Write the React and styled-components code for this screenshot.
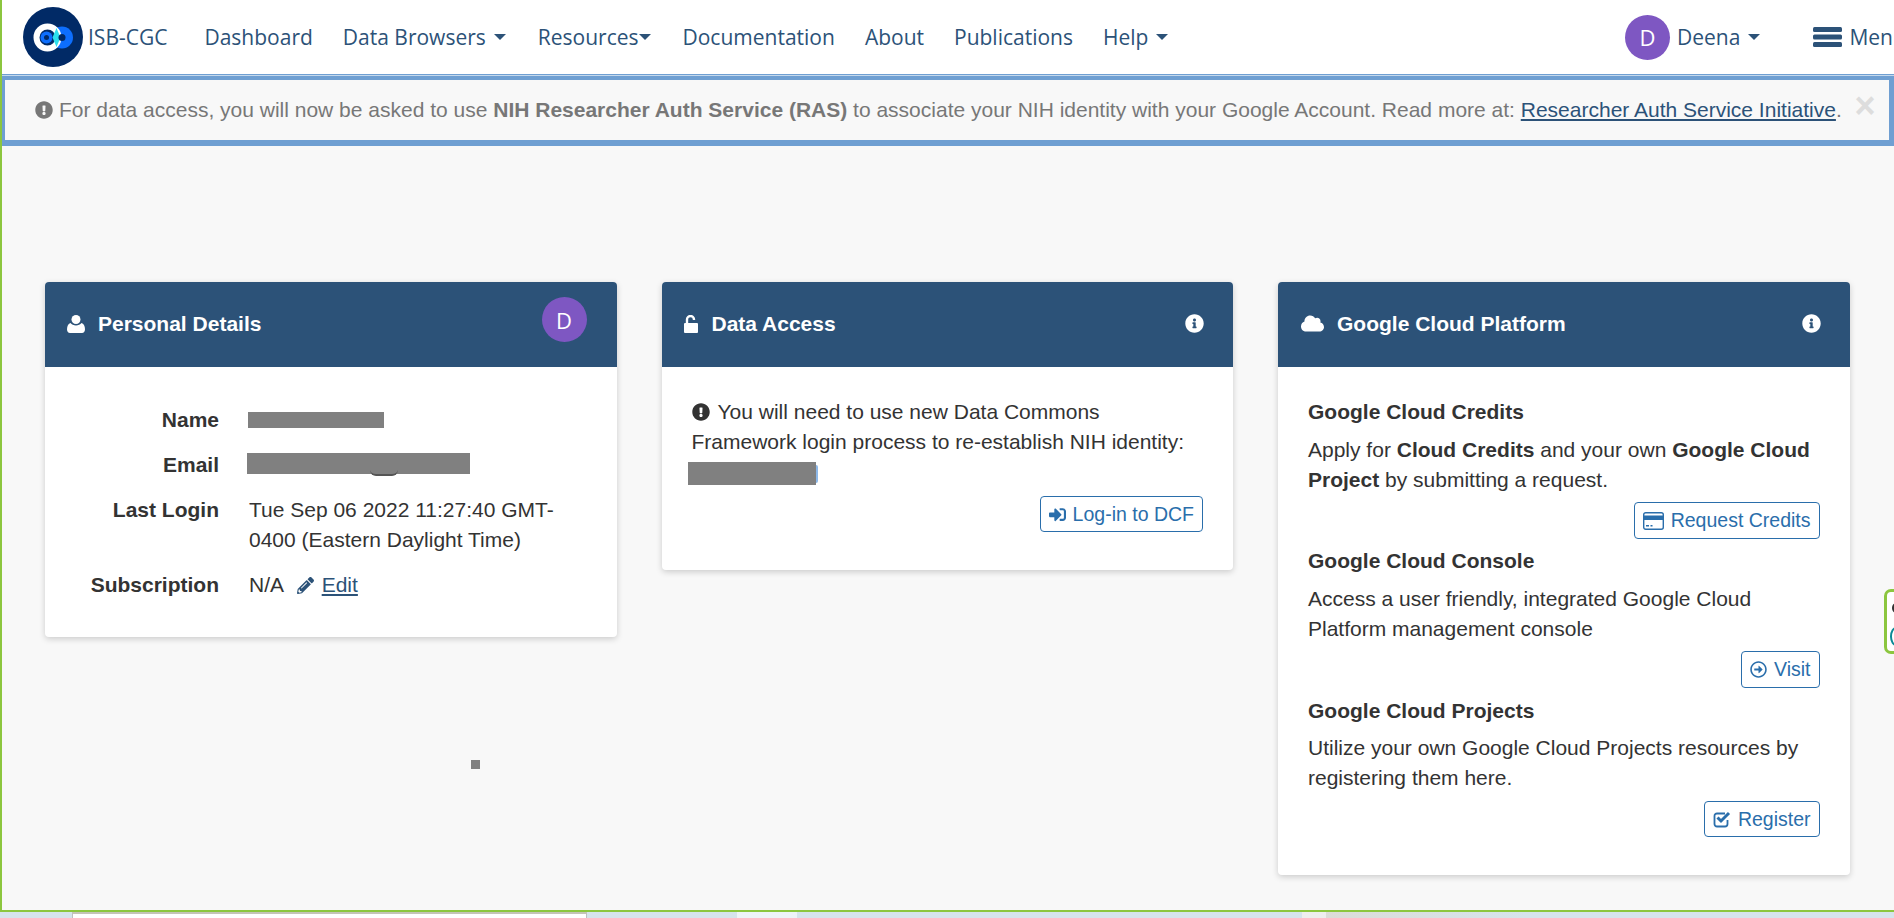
import React from 'react';
import styled, { createGlobalStyle } from 'styled-components';
import { FaInfoCircle, FaExclamationCircle, FaPencilAlt, FaSignInAlt, FaRegArrowAltCircleRight, FaCloud } from 'react-icons/fa';

const GlobalStyle = createGlobalStyle`
  html, body {
    margin: 0;
    padding: 0;
    background: #d6e4ec;
    overflow: hidden;
  }
  * {
    box-sizing: border-box;
  }
`;

const navy = '#2c5278';
const linkBlue = '#2a6eab';
const textDark = '#333333';
const green = '#8cc63f';

const Screen = styled.div`
  position: relative;
  width: 1894px;
  height: 918px;
  overflow: hidden;
  background: #d6e4ec;
  font-family: "Liberation Sans", Arial, sans-serif;
  color: ${textDark};
`;

const Window = styled.div`
  height: 912px;
  border-left: 2px solid ${green};
  border-bottom: 2px solid ${green};
  background: #f8f8f8;
  display: flex;
  flex-direction: column;
`;

const DesktopStrip = styled.div`
  height: 6px;
  display: flex;
`;

const DesktopTile = styled.div`
  flex: none;
  margin-left: ${p => p.$left}px;
  width: ${p => p.$width}px;
  background: ${p => p.$bg};
`;

const WhiteTile = styled(DesktopTile)`
  border-top: 2px solid #c4c4b8;
  border-left: 1px solid #c0c0c0;
  border-right: 1px solid #c0c0c0;
`;

const NavBar = styled.nav`
  height: 74px;
  flex: none;
  background: #fff;
  display: flex;
  align-items: center;
  padding-left: 21px;
  font-family: "Open Sans", sans-serif;
  font-size: 21px;
  color: ${navy};
  white-space: nowrap;
`;

const Logo = styled.svg`
  width: 60px;
  height: 60px;
  flex: none;
`;

const Brand = styled.span`
  margin-left: 5px;
  margin-right: 37px;
`;

const NavItem = styled.a`
  display: flex;
  align-items: center;
  margin-right: ${p => p.$gap ?? 30}px;
  color: ${navy};
`;

const Caret = styled.span`
  display: inline-block;
  flex: none;
  margin-left: ${p => p.$left ?? 8}px;
  border-top: 6px solid ${navy};
  border-left: 6px solid transparent;
  border-right: 6px solid transparent;
`;

const NavRight = styled.div`
  margin-left: auto;
  display: flex;
  align-items: center;
  width: 269px;
  flex: none;
  overflow: hidden;
`;

const Avatar = styled.span`
  width: 45px;
  height: 45px;
  flex: none;
  border-radius: 50%;
  background: #7e57c2;
  color: #fff;
  font-family: "Open Sans", sans-serif;
  font-size: 22px;
  font-weight: normal;
  display: flex;
  align-items: center;
  justify-content: center;
`;

const HeaderAvatar = styled(Avatar)`
  margin-top: -8px;
`;

const UserName = styled.span`
  margin-left: 7px;
`;

const MenuBars = styled.svg`
  width: 29px;
  height: 20px;
  margin-left: 53px;
  margin-right: 7px;
  flex: none;
`;

const Alert = styled.div`
  height: 72px;
  flex: none;
  border-style: solid;
  border-color: #6f9fd2;
  border-width: 6px 5px 6px 3px;
  background: #f8f8f8;
  color: #777;
  font-size: 21px;
  display: flex;
  align-items: center;
  padding-left: 30px;
  position: relative;
  white-space: nowrap;

  &::before {
    content: "";
    position: absolute;
    left: -3px;
    right: -5px;
    top: -5px;
    height: 1px;
    background: #c4d8ec;
  }
`;

const AlertIcon = styled(FaExclamationCircle)`
  width: 18px;
  height: 18px;
  margin-right: 6px;
  flex: none;
`;

const AlertLink = styled.a`
  color: ${navy};
  text-decoration: underline;
`;

const CloseMark = styled.span`
  position: absolute;
  right: 16px;
  top: 18px;
  width: 16px;
  height: 16px;
  font-size: 36px;
  font-weight: bold;
  line-height: 16px;
  color: #dddddd;
  display: flex;
  align-items: center;
  justify-content: center;
`;

const Cards = styled.main`
  display: flex;
  align-items: flex-start;
  gap: 45px;
  padding: 136px 0 0 43px;
`;

const Card = styled.section`
  width: 571.500px;
  flex: none;
  height: ${p => p.$height}px;
  background: #fff;
  border-radius: 4px;
  box-shadow: 0 2px 6px rgba(0, 0, 0, 0.18);
  overflow: hidden;
`;

const CardHeader = styled.header`
  height: 85px;
  background: ${navy};
  color: #fff;
  display: flex;
  align-items: center;
  padding: 0 ${p => p.$right ?? 30}px 2px ${p => p.$left ?? 22}px;
`;

const HeaderIcon = styled.span`
  display: flex;
  width: ${p => p.$width}px;
  flex: none;
`;

const HeaderTitle = styled.h2`
  margin: 0;
  font-size: 21px;
  font-weight: bold;
  flex: 1;
`;

const CardBody = styled.div`
  padding: ${p => p.$padding};
  font-size: 21px;
  line-height: 30px;
`;

const DetailRow = styled.div`
  display: grid;
  grid-template-columns: 174px 1fr;
  column-gap: 30px;
  margin-bottom: 15px;
`;

const DetailLabel = styled.div`
  font-weight: bold;
  text-align: right;
`;

const Redacted = styled.span`
  display: block;
  position: relative;
  background: #808080;
  width: ${p => p.$width}px;
  height: ${p => p.$height}px;
  margin: ${p => p.$margin};
`;

const AtFragment = styled.span`
  position: absolute;
  left: 123px;
  top: calc(100% - 4px);
  width: 28px;
  height: 6px;
  border-bottom: 2px solid #555;
  border-radius: 0 0 14px 14px;
`;

const LinkSliver = styled.span`
  position: absolute;
  left: 100%;
  top: 3px;
  bottom: 2px;
  width: 2px;
  background: #8db8e8;
  border-radius: 0 2px 2px 0;
`;

const EditIcon = styled(FaPencilAlt)`
  width: 17px;
  height: 17px;
  margin: 0 8px 0 8px;
  color: ${navy};
  vertical-align: -2px;
`;

const EditLink = styled.a`
  color: ${navy};
  text-decoration: underline;
`;

const InlineIcon = styled(FaExclamationCircle)`
  width: 18px;
  height: 18px;
  margin-right: 8px;
  vertical-align: -2px;
`;

const ActionRow = styled.div`
  display: flex;
  justify-content: flex-end;
`;

const ActionButton = styled.button`
  height: ${p => p.$height ?? 37}px;
  padding: 0 8px;
  background: #fff;
  border: 1px solid ${linkBlue};
  border-radius: 4px;
  color: ${linkBlue};
  font-family: "Liberation Sans", Arial, sans-serif;
  font-size: 19.500px;
  display: flex;
  align-items: center;
  gap: 7px;
`;

const SectionTitle = styled.h3`
  margin: 0;
  font-size: 21px;
  line-height: 30px;
  padding-bottom: ${p => p.$below ?? 8}px;
`;

const SectionText = styled.p`
  margin: 0 0 ${p => p.$below ?? 7}px;
`;

const Section = styled.div`
  margin-bottom: ${p => p.$below ?? 7}px;
`;

const StrayMark = styled.span`
  position: absolute;
  left: 471px;
  top: 760px;
  width: 9px;
  height: 9px;
  background: #808080;
`;

const EdgeWidget = styled.div`
  position: absolute;
  left: 1884px;
  top: 589px;
  width: 30px;
  height: 65px;
  border: 3px solid ${green};
  border-radius: 7px;
  background: #fff;
`;

const EdgeDot = styled.span`
  position: absolute;
  left: 5px;
  top: 11px;
  width: 8px;
  height: 10px;
  border-radius: 50%;
  background: #333;
`;

const EdgeArc = styled.span`
  position: absolute;
  left: 3px;
  top: 35px;
  width: 12px;
  height: 19px;
  border: 2px solid #0a8a96;
  border-radius: 50%;
`;

const UserIcon = () => (
  <svg width="18" height="18" viewBox="0 0 18 18" fill="#fff">
    <ellipse cx="9" cy="4.500" rx="4.500" ry="4.500" />
    <path d="M3.500 8c1.200 1.600 3.200 2.400 5.500 2.400s4.300-.8 5.500-2.400c2 .4 3.500 3 3.500 6.200 0 2.400-1.200 3.800-3 3.800H3c-1.800 0-3-1.400-3-3.800C0 11 1.500 8.400 3.500 8z" />
  </svg>
);

const UnlockIcon = () => (
  <svg width="14" height="18" viewBox="0 0 14 18" fill="#fff">
    <rect x="0" y="8" width="14" height="10" rx="1" />
    <path d="M3 8V4.500a3.500 3.500 0 0 1 7 0V5" fill="none" stroke="#fff" strokeWidth="2.400" />
  </svg>
);

const CardIcon = () => (
  <svg width="21" height="18" viewBox="0 0 21 18">
    <rect x="0.700" y="0.700" width="19.600" height="16.600" rx="2" fill="#fff" stroke={linkBlue} strokeWidth="1.400" />
    <rect x="1" y="3.500" width="19" height="4.500" fill={linkBlue} />
    <path d="M3 13.800h3M7.500 13.800h2" stroke={linkBlue} strokeWidth="1.500" />
  </svg>
);

const CheckIcon = () => (
  <svg width="18" height="18" viewBox="0 0 18 18" fill="none">
    <path d="M14.500 10v4a2.500 2.500 0 0 1-2.500 2.500H4A2.500 2.500 0 0 1 1.500 14V6A2.500 2.500 0 0 1 4 3.500h8" stroke={linkBlue} strokeWidth="1.800" />
    <path d="M4.500 7.500l3.500 3.500L16 3" stroke={linkBlue} strokeWidth="3" />
  </svg>
);

export default function App() {
  return (
    <Screen>
      <GlobalStyle />
      <Window>
        <NavBar>
          <Logo viewBox="0 0 60 60">
            <circle cx="30" cy="30" r="30" fill="#012a66" />
            <circle cx="39" cy="30.500" r="11" fill="#0d6efd" />
            <circle cx="24.500" cy="30.500" r="11" fill="#012a66" stroke="#fff" strokeWidth="6" />
            <path d="M33.500 21l4 9.500-4 9.500-4-9.500z" fill="#2de0ee" />
            <circle cx="23.500" cy="30.500" r="6" fill="#0d6efd" />
            <circle cx="23.500" cy="30.500" r="2.500" fill="#012a66" />
            <circle cx="39" cy="30.500" r="3.500" fill="#012a66" />
          </Logo>
          <Brand>ISB-CGC</Brand>
          <NavItem>Dashboard</NavItem>
          <NavItem $gap={32}>Data Browsers<Caret /></NavItem>
          <NavItem $gap={32}>Resources<Caret $left={0} /></NavItem>
          <NavItem>Documentation</NavItem>
          <NavItem>About</NavItem>
          <NavItem>Publications</NavItem>
          <NavItem>Help<Caret /></NavItem>
          <NavRight>
            <Avatar>D</Avatar>
            <UserName>Deena</UserName>
            <Caret />
            <MenuBars viewBox="0 0 29 20" fill={navy}>
              <rect width="29" height="5" rx="1.500" />
              <rect y="7.500" width="29" height="5" rx="1.500" />
              <rect y="15" width="29" height="5" rx="1.500" />
            </MenuBars>
            <span>Menu</span>
          </NavRight>
        </NavBar>
        <Alert>
          <AlertIcon />
          <span>
            For data access, you will now be asked to use <b>NIH Researcher Auth Service (RAS)</b> to associate your NIH identity with your Google Account. Read more at: <AlertLink>Researcher Auth Service Initiative</AlertLink>.
          </span>
          <CloseMark>×</CloseMark>
        </Alert>
        <Cards>
          <Card $height={355}>
            <CardHeader>
              <HeaderIcon $width={31}><UserIcon /></HeaderIcon>
              <HeaderTitle>Personal Details</HeaderTitle>
              <HeaderAvatar>D</HeaderAvatar>
            </CardHeader>
            <CardBody $padding="38px 40px 0 0">
              <DetailRow>
                <DetailLabel>Name</DetailLabel>
                <Redacted $width={136} $height={16} $margin="7px 0 7px -1px" />
              </DetailRow>
              <DetailRow>
                <DetailLabel>Email</DetailLabel>
                <Redacted $width={223} $height={21} $margin="3px 0 6px -2px"><AtFragment /></Redacted>
              </DetailRow>
              <DetailRow>
                <DetailLabel>Last Login</DetailLabel>
                <div>Tue Sep 06 2022 11:27:40 GMT-0400 (Eastern Daylight Time)</div>
              </DetailRow>
              <DetailRow>
                <DetailLabel>Subscription</DetailLabel>
                <div>N/A <EditIcon /><EditLink>Edit</EditLink></div>
              </DetailRow>
            </CardBody>
          </Card>
          <Card $height={288}>
            <CardHeader $right={29}>
              <HeaderIcon $width={28}><UnlockIcon /></HeaderIcon>
              <HeaderTitle>Data Access</HeaderTitle>
              <FaInfoCircle size={19} />
            </CardHeader>
            <CardBody $padding="30px 30px 0">
              <div><InlineIcon />You will need to use new Data Commons Framework login process to re-establish NIH identity:</div>
              <Redacted $width={128} $height={23} $margin="5px 0 11px -4px"><LinkSliver /></Redacted>
              <ActionRow>
                <ActionButton $height={36}><FaSignInAlt size={17} />Log-in to DCF</ActionButton>
              </ActionRow>
            </CardBody>
          </Card>
          <Card $height={593}>
            <CardHeader $left={23} $right={29}>
              <HeaderIcon $width={36}><FaCloud size={23} /></HeaderIcon>
              <HeaderTitle>Google Cloud Platform</HeaderTitle>
              <FaInfoCircle size={19} />
            </CardHeader>
            <CardBody $padding="30px 30px 0">
              <Section>
                <SectionTitle>Google Cloud Credits</SectionTitle>
                <SectionText>Apply for <b>Cloud Credits</b> and your own <b>Google Cloud Project</b> by submitting a request.</SectionText>
                <ActionRow><ActionButton><CardIcon />Request Credits</ActionButton></ActionRow>
              </Section>
              <Section $below={8}>
                <SectionTitle>Google Cloud Console</SectionTitle>
                <SectionText>Access a user friendly, integrated Google Cloud Platform management console</SectionText>
                <ActionRow><ActionButton><FaRegArrowAltCircleRight size={17} />Visit</ActionButton></ActionRow>
              </Section>
              <Section>
                <SectionTitle $below={7}>Google Cloud Projects</SectionTitle>
                <SectionText $below={8}>Utilize your own Google Cloud Projects resources by registering them here.</SectionText>
                <ActionRow><ActionButton $height={36}><CheckIcon />Register</ActionButton></ActionRow>
              </Section>
            </CardBody>
          </Card>
        </Cards>
      </Window>
      <DesktopStrip>
        <WhiteTile $left={72} $width={515} $bg="#ffffff" />
        <DesktopTile $left={150} $width={60} $bg="#eef4f8" />
        <DesktopTile $left={505} $width={24} $bg="#eeeeee" />
        <DesktopTile $left={0} $width={200} $bg="linear-gradient(90deg, #dcdcd8, #d6e4ec)" />
      </DesktopStrip>
      <StrayMark />
      <EdgeWidget>
        <EdgeDot />
        <EdgeArc />
      </EdgeWidget>
    </Screen>
  );
}
